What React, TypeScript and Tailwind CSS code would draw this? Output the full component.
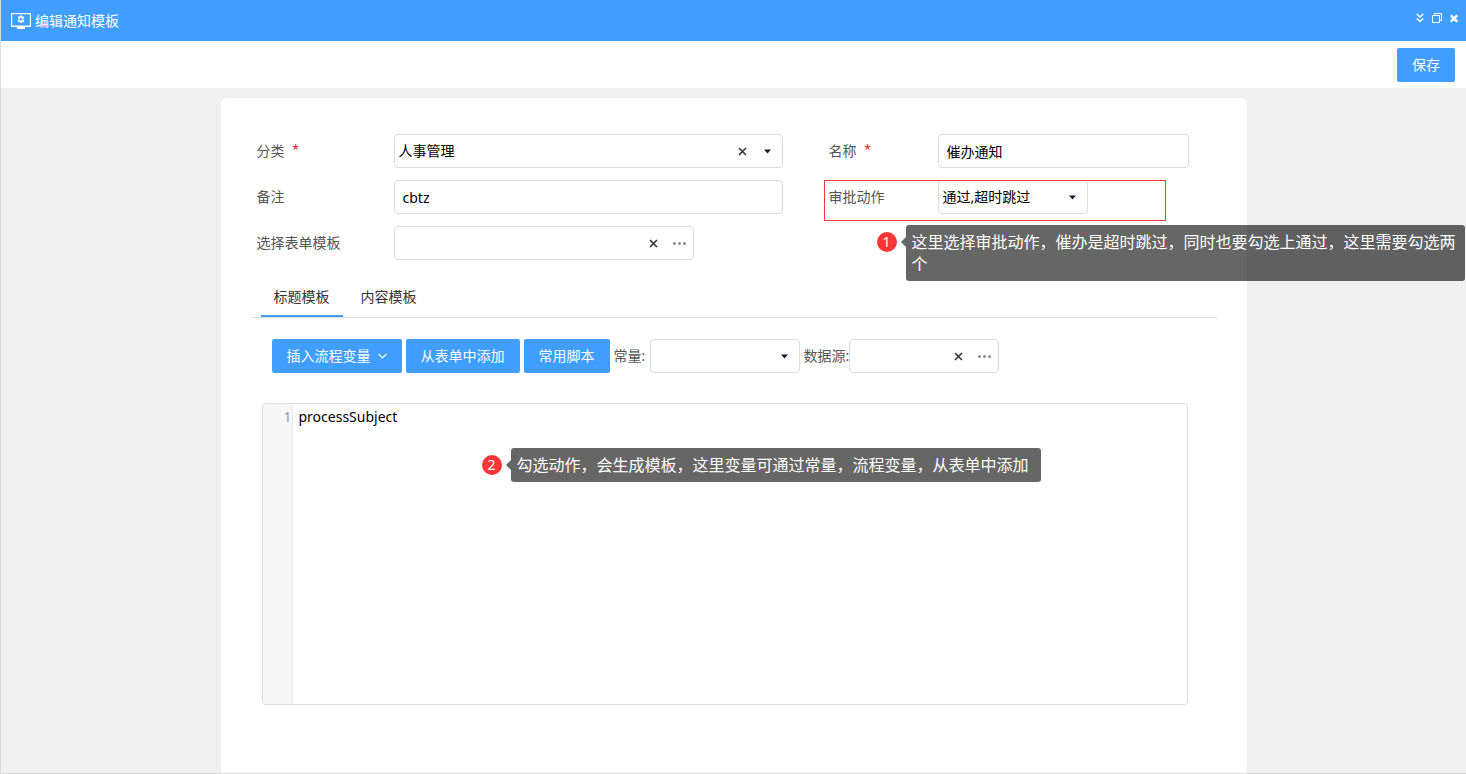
import type { ReactNode } from "react";
import clsx from "clsx";

const fieldClass =
    "h-[34px] w-full rounded border border-[#dcdcdc] bg-white text-sm text-black outline-none";

function CrossIcon() {
    return (
        <svg width="9" height="9" viewBox="0 0 9 9" aria-hidden="true">
            <path
                d="M1 1l7 7M8 1l-7 7"
                stroke="#2f3542"
                strokeWidth="1.6"
                fill="none"
            />
        </svg>
    );
}

function CaretIcon() {
    return (
        <svg
            width="7"
            height="5"
            viewBox="0 0 7 5"
            aria-hidden="true"
            className="pointer-events-none absolute top-[15px] right-3"
        >
            <path d="M0 0.5h7L3.5 4.5z" fill="#1a1a2e" />
        </svg>
    );
}

function DotsIcon() {
    return (
        <svg width="13" height="3" viewBox="0 0 13 3" aria-hidden="true">
            <circle cx="1.5" cy="1.5" r="1.5" fill="#8c8c8c" />
            <circle cx="6.5" cy="1.5" r="1.5" fill="#8c8c8c" />
            <circle cx="11.5" cy="1.5" r="1.5" fill="#8c8c8c" />
        </svg>
    );
}

type SelectBoxProps = {
    id: string;
    value: string;
    clearable?: boolean;
};

function SelectBox({ id, value, clearable }: SelectBoxProps) {
    return (
        <div className="relative w-full">
            <select
                id={id}
                defaultValue={value}
                className={clsx(fieldClass, "appearance-none pr-8 pl-1")}
            >
                <option value={value}>{value}</option>
            </select>
            {clearable && (
                <button
                    type="button"
                    aria-label="清除"
                    className="absolute inset-y-0 right-8 flex w-4 items-center justify-center"
                >
                    <CrossIcon />
                </button>
            )}
            <CaretIcon />
        </div>
    );
}

function PickerBox({ id }: { id: string }) {
    return (
        <div className="relative w-full">
            <input id={id} type="text" className={clsx(fieldClass, "pr-14 pl-2")} />
            <button
                type="button"
                aria-label="清除"
                className="absolute inset-y-0 right-8 flex w-4 items-center justify-center"
            >
                <CrossIcon />
            </button>
            <button
                type="button"
                aria-label="选择"
                className="absolute inset-y-0 right-1 flex w-5 items-center justify-center"
            >
                <DotsIcon />
            </button>
        </div>
    );
}

type FormLabelProps = {
    htmlFor: string;
    text: string;
    required?: boolean;
    className: string;
};

function FormLabel({ htmlFor, text, required, className }: FormLabelProps) {
    return (
        <label
            htmlFor={htmlFor}
            className={clsx(
                "shrink-0 leading-[34px] whitespace-nowrap text-[#555]",
                className,
            )}
        >
            {text}
            {required && (
                <span className="ml-2 font-['Liberation_Sans',sans-serif] text-base text-[#ff1a2d]">
                    *
                </span>
            )}
        </label>
    );
}

type NoteProps = {
    index: number;
    children: ReactNode;
    className: string;
};

// Numbered callout laid over the form
function Note({ index, children, className }: NoteProps) {
    return (
        <div className={clsx("absolute z-10 flex items-start", className)}>
            <span className="mt-[7px] flex size-5 shrink-0 items-center justify-center rounded-full bg-[#fd3737] text-sm leading-5 text-white">
                {index}
            </span>
            <svg
                width="5"
                height="10"
                viewBox="0 0 5 10"
                aria-hidden="true"
                className="mt-3 ml-1 shrink-0"
            >
                <path d="M5 0v10L0 5z" fill="#000" fillOpacity="0.6" />
            </svg>
            <p className="flex-1 rounded-[3px] bg-black/60 py-1.5 pr-2 pl-1.5 text-base leading-[22px] text-white">
                {children}
            </p>
        </div>
    );
}

function TitleBar() {
    return (
        <header className="flex h-[41px] items-center justify-between bg-[#409eff] pr-2 pl-2.5 text-white">
            <div className="flex items-center gap-1">
                <svg width="20" height="17" viewBox="0 0 20 17" aria-hidden="true">
                    <path d="M0.6 14.5V1.6h18.800V14.500" fill="none" stroke="#fff" strokeWidth="1.2" />
                    <path d="M0 13.5h20v1.500H0zM6 15h8v2H6z" fill="#fff" />
                    <path
                        d="M9 3.500h2v1.300l1.200-.7 1.200 1.900-1 .6v1.300l1 .6-1.200 1.900-1.200-.7V11H9V9.700l-1.200.7-1.200-1.900 1-.6V6.600l-1-.6 1.200-1.900 1.200.7z"
                        fill="#fff"
                    />
                    <circle cx="10" cy="7.25" r="1.3" fill="#409eff" />
                </svg>
                <h1 className="text-sm">编辑通知模板</h1>
            </div>
            <div className="mb-[5px] flex items-center gap-2">
                <button type="button" aria-label="收起">
                    <svg width="8" height="10" viewBox="0 0 8 10" className="block">
                        <path
                            d="M0.8 1L4 4l3.2-3M0.8 5.500L4 8.500l3.2-3"
                            fill="none"
                            stroke="#fff"
                            strokeWidth="1.6"
                        />
                    </svg>
                </button>
                <button type="button" aria-label="还原">
                    <svg width="10" height="10" viewBox="0 0 10 10" className="block">
                        <path
                            d="M0.5 2.5h7v7h-7zM2.5 2.5v-2h7v7h-2"
                            fill="none"
                            stroke="#fff"
                        />
                    </svg>
                </button>
                <button type="button" aria-label="关闭">
                    <svg width="8" height="10" viewBox="0 0 8 10" className="block">
                        <path d="M0.8 2.300l6.400 6.400M7.200 2.300L0.800 8.700" fill="none" stroke="#fff" strokeWidth="2.4" />
                    </svg>
                </button>
            </div>
        </header>
    );
}

const tabs = [
    { label: "标题模板", active: true },
    { label: "内容模板", active: false },
];

const primaryButton =
    "flex h-[34px] shrink-0 items-center rounded-xs bg-[#409eff] px-[15px] text-sm text-white";

export default function App() {
    return (
        <div className="flex min-h-screen flex-col border-b border-l border-[#dcdcdc] bg-[#f0f0f0] font-['Noto_Sans','Noto_Sans_CJK_SC',sans-serif] text-sm">
            <TitleBar />
            <div className="flex h-[47px] items-center justify-end bg-white pr-[11px]">
                <button type="button" className={primaryButton}>
                    保存
                </button>
            </div>

            <main className="mx-auto mt-2.5 w-full max-w-[1026px] flex-1 rounded-t-md bg-white px-[30px] pt-9 pb-[68px]">
                <form className="grid grid-cols-[526fr_360fr] gap-x-[46px] pr-7 pl-1.5">
                    <div className="flex flex-col gap-3">
                        <div className="flex">
                            <FormLabel htmlFor="category" text="分类" required className="w-[137px]" />
                            <SelectBox id="category" value="人事管理" clearable />
                        </div>
                        <div className="flex">
                            <FormLabel htmlFor="remark" text="备注" className="w-[137px]" />
                            <input
                                id="remark"
                                type="text"
                                defaultValue="cbtz"
                                className={clsx(fieldClass, "px-2")}
                            />
                        </div>
                        <div className="flex">
                            <FormLabel htmlFor="form-template" text="选择表单模板" className="w-[137px]" />
                            <div className="w-[300px]">
                                <PickerBox id="form-template" />
                            </div>
                        </div>
                    </div>

                    <div className="flex flex-col gap-3">
                        <div className="flex">
                            <FormLabel htmlFor="name" text="名称" required className="w-[109px]" />
                            <input
                                id="name"
                                type="text"
                                defaultValue="催办通知"
                                className={clsx(fieldClass, "px-2")}
                            />
                        </div>
                        <div className="relative flex">
                            <FormLabel htmlFor="action" text="审批动作" className="w-[109px]" />
                            <div className="w-[150px]">
                                <SelectBox id="action" value="通过,超时跳过" />
                            </div>
                            <div className="pointer-events-none absolute top-0 -left-[5px] h-[41px] w-[342px] border border-[#fd3737]" />
                            <Note index={1} className="top-[45px] left-12 w-[588px]">
                                这里选择审批动作，催办是超时跳过，同时也要勾选上通过，这里需要勾选两个
                            </Note>
                        </div>
                    </div>
                </form>

                <nav className="mt-[18px] flex gap-[5px] border-b border-[#dcdcdc] pl-2.5">
                    {tabs.map((tab) => (
                        <button
                            key={tab.label}
                            type="button"
                            className={clsx(
                                "h-[39px] border-b-2 px-[13px] text-sm text-[#333]",
                                tab.active ? "border-[#409eff]" : "border-transparent",
                            )}
                        >
                            {tab.label}
                        </button>
                    ))}
                </nav>

                <div className="mt-[21px] flex gap-1 pl-[21px]">
                    <button type="button" className={clsx(primaryButton, "gap-[7px]")}>
                        插入流程变量
                        <svg width="9" height="6" viewBox="0 0 9 6" aria-hidden="true">
                            <path
                                d="M0.5 0.8l4 4 4-4"
                                fill="none"
                                stroke="#fff"
                                strokeWidth="1.2"
                            />
                        </svg>
                    </button>
                    <button type="button" className={primaryButton}>
                        从表单中添加
                    </button>
                    <button type="button" className={primaryButton}>
                        常用脚本
                    </button>
                    <div className="flex gap-1">
                        <FormLabel htmlFor="constant" text="常量:" className="w-8" />
                        <div className="w-[150px]">
                            <SelectBox id="constant" value="" />
                        </div>
                    </div>
                    <div className="flex">
                        <FormLabel htmlFor="datasource" text="数据源:" className="w-[45px]" />
                        <div className="w-[150px]">
                            <PickerBox id="datasource" />
                        </div>
                    </div>
                </div>

                <div className="relative mt-[30px] mr-[29px] ml-[11px] flex h-[302px] rounded border border-[#dcdcdc]">
                    <div className="w-[30px] shrink-0 rounded-l border-r border-[#e8e8e8] bg-[#f7f7f7] pt-[3px] text-right leading-5 text-[#999]">
                        1
                    </div>
                    <textarea
                        aria-label="标题模板"
                        defaultValue="processSubject"
                        className="flex-1 resize-none rounded-r bg-white px-1.5 pt-[3px] leading-5 text-black outline-none"
                    />
                    <Note index={2} className="top-11 left-[219px] w-[559px]">
                        勾选动作，会生成模板，这里变量可通过常量，流程变量，从表单中添加
                    </Note>
                </div>
            </main>
        </div>
    );
}
